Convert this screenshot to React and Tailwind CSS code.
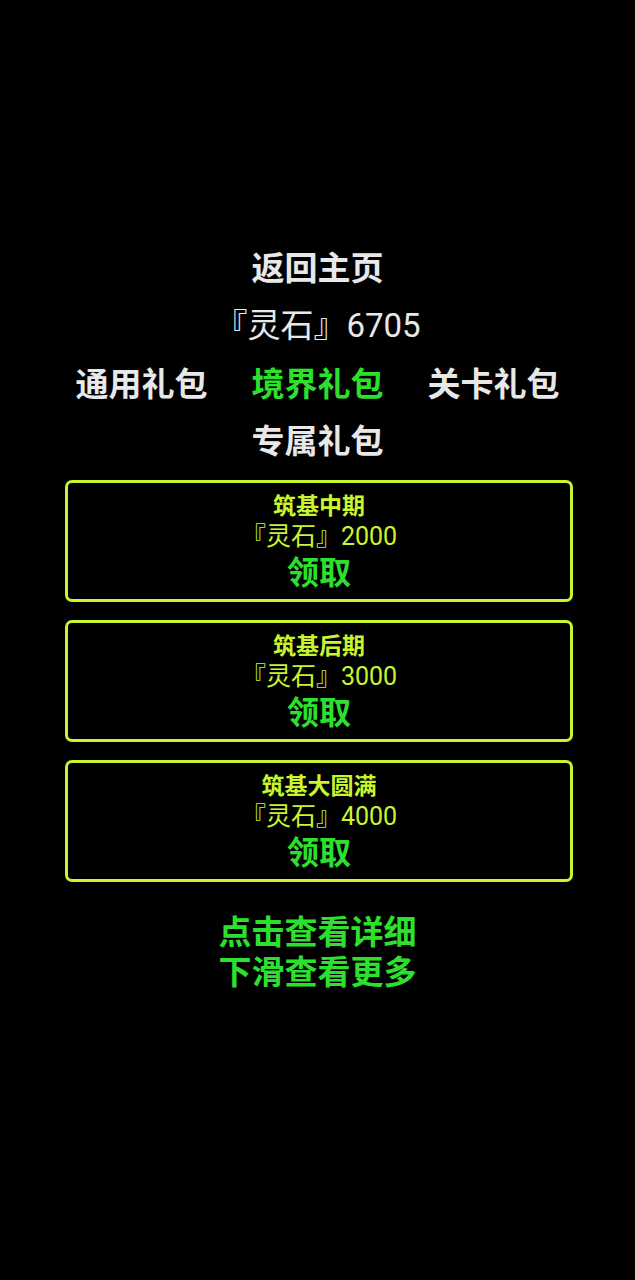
import React from "react";

const font = { fontFamily: '"Noto Sans CJK SC", "Noto Sans", sans-serif' };

function Gift({ name, amount }) {
  return (
    <div className="ml-[65px] w-[508px] h-[122px] rounded-[7px] border-[3px] border-[#c8f52e] flex flex-col items-center pt-[6px]">
      <div className="text-[23px] leading-[30px] font-bold text-[#c8f52e]">{name}</div>
      <div className="text-[25px] leading-[31px] text-[#c8f52e]">
        『灵石』<span style={{ fontFamily: 'Roboto, "Liberation Sans", sans-serif' }}>{amount}</span>
      </div>
      <div className="text-[32px] leading-[36px] font-bold text-[#2ee02e]">领取</div>
    </div>
  );
}

export default function App() {
  return (
    <div className="w-[635px] min-h-[1280px] bg-black" style={font}>
      <div className="pt-[238px] flex flex-col items-center text-[33px] leading-[57px] font-bold text-[#e8e8e8]">
        <div>返回主页</div>
        <div className="font-normal">
          『灵石』<span style={{ fontFamily: 'Roboto, "Liberation Sans", sans-serif' }}>6705</span>
        </div>
        <div className="flex gap-[44px]">
          <span>通用礼包</span>
          <span className="text-[#2ee02e]">境界礼包</span>
          <span>关卡礼包</span>
        </div>
        <div>专属礼包</div>
      </div>
      <div className="mt-[12px] flex flex-col gap-[18px]">
        <Gift name="筑基中期" amount="2000" />
        <Gift name="筑基后期" amount="3000" />
        <Gift name="筑基大圆满" amount="4000" />
      </div>
      <div className="mt-[28px] flex flex-col items-center text-[33px] leading-[40px] font-bold text-[#2ee02e]">
        <div>点击查看详细</div>
        <div>下滑查看更多</div>
      </div>
    </div>
  );
}
